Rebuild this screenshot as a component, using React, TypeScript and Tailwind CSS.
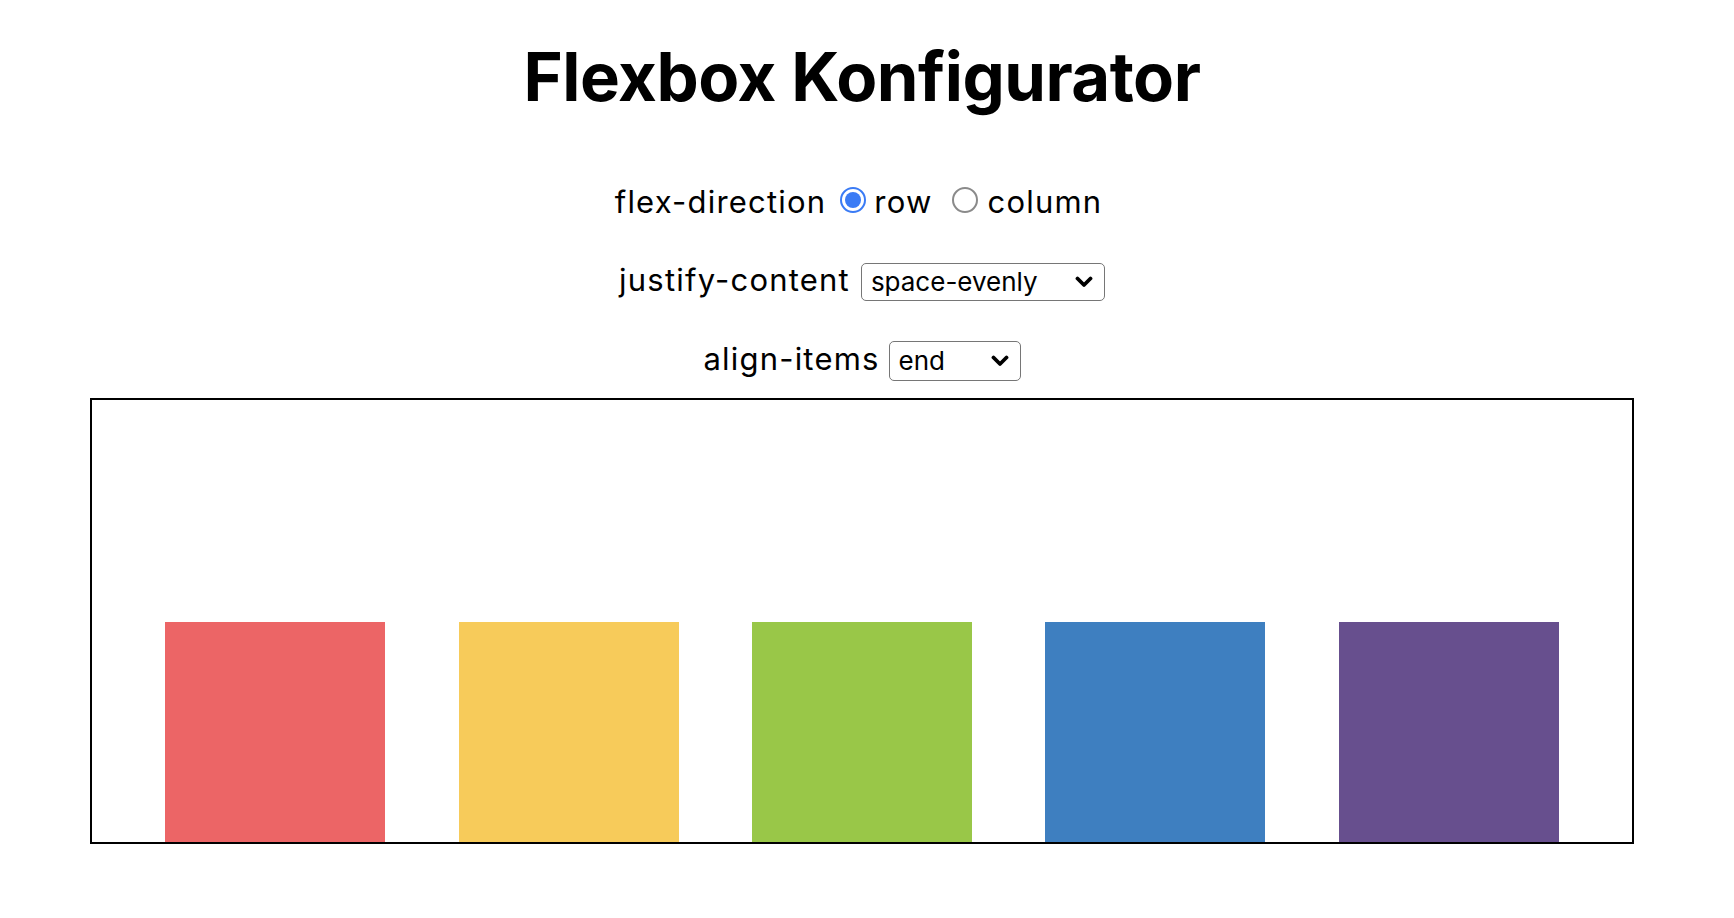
import { useState } from 'react';

const items = ['bg-[#ec6566]', 'bg-[#f7cb5a]', 'bg-[#99c748]', 'bg-[#3e7fc0]', 'bg-[#674f8e]'];

function Radio({ checked }: { checked: boolean }) {
  return checked ? (
    <span className="flex h-[26px] w-[26px] items-center justify-center rounded-full border-[2px] border-[#3a7bf5] bg-white">
      <span className="h-[16px] w-[16px] rounded-full bg-[#3a7bf5]" />
    </span>
  ) : (
    <span className="block h-[26px] w-[26px] rounded-full border-[2px] border-[#8a8a8a] bg-white" />
  );
}

function Select({ value, width, height, leading }: { value: string; width: string; height: string; leading: string }) {
  return (
    <div
      className={`flex ${width} ${height} items-start justify-between rounded-[5px] border border-[#767676] bg-white pl-[9px] pr-[11px] text-[26px] tracking-normal text-black`}
    >
      <span className={leading}>{value}</span>
      <svg className="h-[12px] w-[18px] self-center" viewBox="0 0 18 12" fill="none">
        <path d="M2.5 2.5l6.5 6.5 6.5-6.5" stroke="black" strokeWidth="3.8" strokeLinecap="round" strokeLinejoin="round" />
      </svg>
    </div>
  );
}

export default function App() {
  const [dir] = useState('row');

  return (
    <div className="min-h-screen bg-white font-['Inter',sans-serif] text-black">
      <div className="ml-[90px] flex w-[1544px] flex-col items-center">
        <h1 className="mt-[37px] text-[67px] font-bold leading-[80px] tracking-[-0.5px]">Flexbox Konfigurator</h1>

        <div className="mt-[66px] flex items-center pr-[7px] text-[31px] leading-[38px] tracking-[1.2px]">
          <span>flex-direction</span>
          <span className="mb-[5px] ml-[14px]">
            <Radio checked={dir === 'row'} />
          </span>
          <span className="ml-[8px]">row</span>
          <span className="mb-[5px] ml-[20px]">
            <Radio checked={dir === 'column'} />
          </span>
          <span className="ml-[9px]">column</span>
        </div>

        <div className="mt-[40px] flex items-baseline gap-[11px] text-[31px] leading-[38px] tracking-[1.2px]">
          <span>justify-content</span>
          <Select value="space-evenly" width="w-[244px]" height="h-[38px]" leading="leading-[36px]" />
        </div>

        <div className="mt-[39px] flex items-baseline gap-[9px] text-[31px] leading-[38px] tracking-[1.2px]">
          <span>align-items</span>
          <Select value="end" width="w-[132px]" height="h-[40px]" leading="leading-[38px]" />
        </div>

        <div className="mt-[17px] flex h-[446px] w-full items-end justify-evenly border-2 border-black">
          {items.map((c) => (
            <div key={c} className={`h-[220px] w-[220px] ${c}`} />
          ))}
        </div>
      </div>
    </div>
  );
}
